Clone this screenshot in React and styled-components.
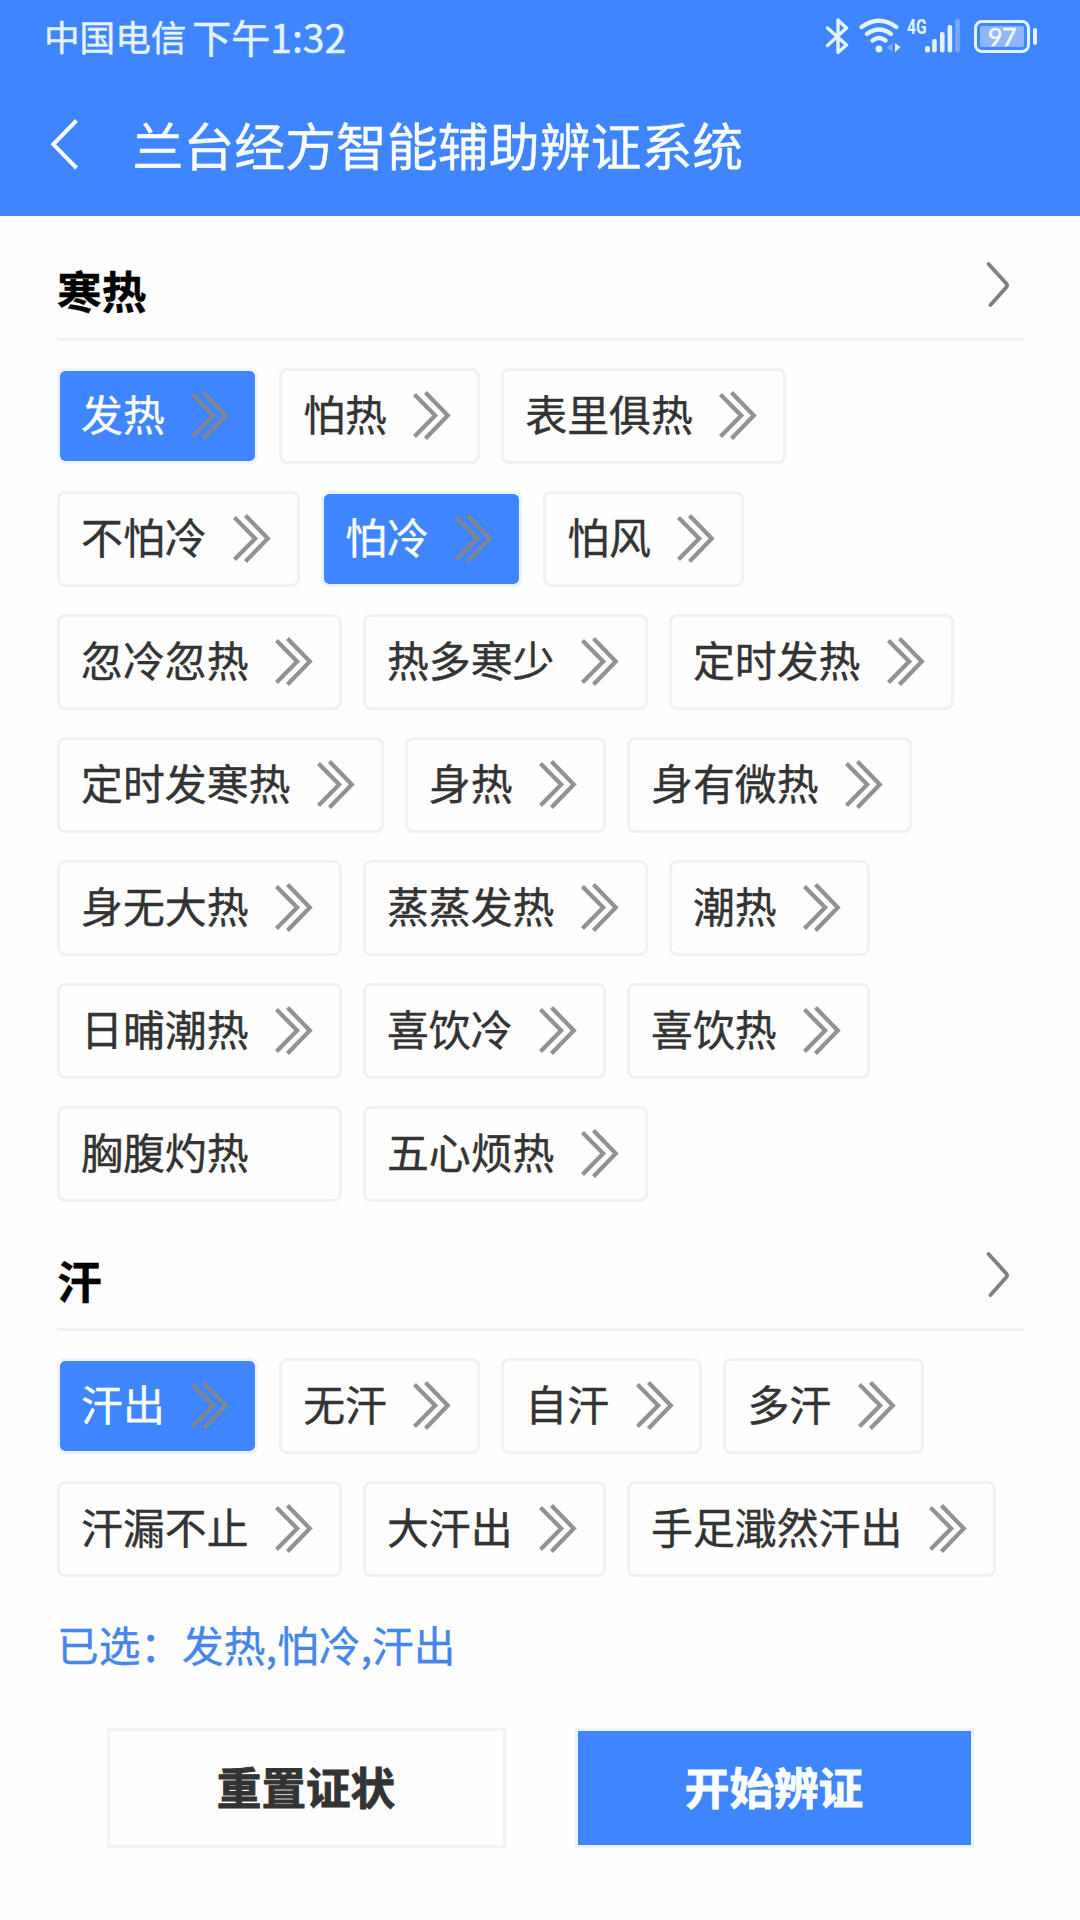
import React, { useState } from "react";
import styled, { createGlobalStyle } from "styled-components";

const GlobalStyle = createGlobalStyle`
  * {
    box-sizing: border-box;
  }

  body {
    margin: 0;
    background: #fefefe;
    font-family: "Noto Sans CJK SC", "Noto Sans", sans-serif;
  }

  button {
    font-family: inherit;
    margin: 0;
    cursor: pointer;
  }
`;

const Page = styled.div`
  width: 1080px;
  height: 1920px;
  background: #fefefe;
  overflow: hidden;
`;

const Header = styled.header`
  height: 216px;
  background: #3e85ff;
`;

const StatusBar = styled.div`
  height: 76px;
  padding: 0 43px 0 44px;
  display: flex;
  align-items: flex-start;
  color: #e4f3ff;
`;

const Carrier = styled.span`
  font-size: 35.6px;
  line-height: 72px;
  white-space: nowrap;
  -webkit-text-stroke: 0.5px currentColor;
`;

const Clock = styled.span`
  font-size: 39px;
  line-height: 72px;
  margin-left: 6px;
  white-space: nowrap;
  -webkit-text-stroke: 0.5px currentColor;
`;

const StatusIcons = styled.div`
  display: flex;
  align-items: flex-start;
  height: 76px;
  margin-left: auto;
`;

const BluetoothIcon = styled.svg`
  width: 24px;
  height: 76px;
  margin-right: 9px;
`;

const WifiIcon = styled.svg`
  width: 44px;
  height: 76px;
`;

const NetworkType = styled.span`
  width: 18px;
  margin: 15px 0 0 5px;
  font-family: "Roboto", sans-serif;
  font-size: 20px;
  font-weight: 700;
  line-height: 24px;
  transform: scaleX(0.78);
  transform-origin: 0 0;
`;

const SignalIcon = styled.svg`
  width: 36px;
  height: 76px;
`;

const Battery = styled.div`
  display: flex;
  align-items: center;
  gap: 3px;
  height: 33px;
  margin: 20px 0 0 13px;

  &::after {
    content: "";
    width: 4px;
    height: 17px;
    border-radius: 2px;
    background: #e4f3ff;
  }
`;

const BatteryBody = styled.div`
  width: 56px;
  height: 33px;
  padding: 3px;
  border: 3px solid #e4f3ff;
  border-radius: 8px;
`;

const BatteryLevel = styled.div`
  height: 21px;
  border-radius: 2px;
  background: #8fb5ff;
  color: #f0f8ff;
  font-family: "Lato", sans-serif;
  font-size: 25px;
  font-weight: 400;
  line-height: 21px;
  letter-spacing: -0.6px;
  text-align: center;
  -webkit-text-stroke: 0.6px currentColor;
`;

const TitleBar = styled.div`
  height: 140px;
  padding-left: 49px;
  display: flex;
  align-items: flex-start;
`;

const BackIcon = styled.svg`
  width: 30px;
  height: 52px;
  margin-top: 42px;
`;

const Title = styled.h1`
  margin: 0 0 0 53.5px;
  font-size: 50.9px;
  font-weight: 400;
  line-height: 136px;
  color: #fafeff;
  -webkit-text-stroke: 0.4px currentColor;
`;

const Section = styled.section`
  padding: 0 56px 4px 57px;
`;

const SectionHeader = styled.div`
  height: 125px;
  border-bottom: 3px solid #f1f1f1;
  display: flex;
  justify-content: space-between;
  align-items: flex-start;
`;

const SectionTitle = styled.h2`
  margin: 0;
  font-size: 44.8px;
  font-weight: 700;
  line-height: 148px;
  color: #000;
  -webkit-text-stroke: 0.4px currentColor;
`;

const SectionArrow = styled.svg`
  width: 26px;
  height: 48px;
  margin: 45px 13px 0 0;
`;

const Chips = styled.div`
  padding-top: 27px;
  display: flex;
  flex-wrap: wrap;
  gap: 27px 21.2px;
`;

const Chip = styled.button`
  height: 96px;
  padding: 0 25.7px 0 21px;
  border: 3px solid ${({ $selected }) => ($selected ? "#ebf3fe" : "#f1f1f1")};
  border-radius: 8px;
  display: flex;
  align-items: center;
  background: ${({ $selected }) => ($selected ? "#3e85ff" : "#fefefe")};
  background-clip: padding-box;
  color: ${({ $selected }) => ($selected ? "#fafeff" : "#333")};
  font-size: 41.9px;
  white-space: nowrap;
  -webkit-text-stroke: 0.4px currentColor;
`;

const ChipLabel = styled.span`
  line-height: 84px;
  height: 90px;
`;

const ChipArrow = styled.svg`
  width: 38px;
  height: 50px;
  margin: -2px 0 0 26.5px;
  visibility: ${({ $hidden }) => ($hidden ? "hidden" : "visible")};
`;

const Selected = styled.p`
  margin: 0;
  padding: 23px 57px 0;
  font-size: 41.7px;
  line-height: 80px;
  color: #4586ea;
  -webkit-text-stroke: 0.4px currentColor;
`;

const Actions = styled.div`
  padding: 44px 0 0 107px;
  display: flex;
  gap: 69px;
`;

const ActionButton = styled.button`
  width: 399px;
  height: 120px;
  padding: 0 1px 5px 0;
  border: 3px solid ${({ $primary }) => ($primary ? "#ebf5fe" : "#f3f3f3")};
  background: ${({ $primary }) => ($primary ? "#3e85ff" : "#fefefe")};
  background-clip: padding-box;
  color: ${({ $primary }) => ($primary ? "#fafeff" : "#333")};
  font-size: 44.6px;
  font-weight: 700;
  -webkit-text-stroke: 0.9px currentColor;
`;

const GROUPS = [
  {
    title: "寒热",
    items: [
      "发热", "怕热", "表里俱热", "不怕冷", "怕冷", "怕风",
      "忽冷忽热", "热多寒少", "定时发热", "定时发寒热", "身热", "身有微热",
      "身无大热", "蒸蒸发热", "潮热", "日晡潮热", "喜饮冷", "喜饮热",
      "胸腹灼热", "五心烦热",
    ],
  },
  {
    title: "汗",
    items: ["汗出", "无汗", "自汗", "多汗", "汗漏不止", "大汗出", "手足濈然汗出"],
  },
];

const NO_DETAIL = ["胸腹灼热"];

function PhoneStatus() {
  return (
    <StatusBar>
      <Carrier>中国电信</Carrier>
      <Clock>下午1:32</Clock>
      <StatusIcons>
        <BluetoothIcon viewBox="0 0 24 76" fill="none" stroke="currentColor" strokeWidth="3.4" strokeLinecap="round" strokeLinejoin="round">
          <path d="M2.5 28 L21.5 45 L13 52.5 V20 L21.5 28 L2.5 45.5" />
        </BluetoothIcon>
        <WifiIcon viewBox="0 0 44 76" fill="none" stroke="currentColor" strokeWidth="4.4" strokeLinecap="round">
          <path d="M3.5 27 Q21 14.5 38.5 27" />
          <path d="M9 34 Q21 25 33 34" />
          <path d="M14.5 40.5 Q21 35.5 27.5 40.5" />
          <circle cx="21" cy="49" r="3.4" fill="currentColor" stroke="none" />
          <path d="M34.5 43 V52 L28.5 47.5 Z" fill="#77aaff" stroke="none" />
          <path d="M37 43 L42.5 47 L37 52.5 Z" fill="currentColor" stroke="none" />
        </WifiIcon>
        <NetworkType>4G</NetworkType>
        <SignalIcon viewBox="0 0 36 76" fill="currentColor">
          <rect x="0" y="46" width="5" height="6.5" rx="2" />
          <rect x="7.2" y="39" width="4.6" height="13.5" rx="2" />
          <rect x="15" y="32" width="4.6" height="20.5" rx="2" />
          <rect x="22.6" y="25" width="4.6" height="27.5" rx="2" />
          <rect x="30.2" y="19" width="4.6" height="33.5" rx="2" opacity="0.35" />
        </SignalIcon>
        <Battery>
          <BatteryBody>
            <BatteryLevel>97</BatteryLevel>
          </BatteryBody>
        </Battery>
      </StatusIcons>
    </StatusBar>
  );
}

function Symptom({ name, selected, onToggle }) {
  return (
    <Chip $selected={selected} onClick={onToggle}>
      <ChipLabel>{name}</ChipLabel>
      <ChipArrow
        $hidden={NO_DETAIL.includes(name)}
        viewBox="0 0 38 50"
        fill="none"
        stroke="#868686"
        strokeWidth="4.2"
        strokeOpacity="0.9"
      >
        <path d="M1.5 4.5 L22.2 25.5 L1.5 46.5" />
        <path d="M12.5 2.5 L34.8 25.5 L12.5 48.5" />
      </ChipArrow>
    </Chip>
  );
}

export default function App() {
  const [selected, setSelected] = useState(["发热", "怕冷", "汗出"]);

  const toggle = (name) =>
    setSelected((list) =>
      list.includes(name) ? list.filter((n) => n !== name) : [...list, name]
    );

  return (
    <Page>
      <GlobalStyle />
      <Header>
        <PhoneStatus />
        <TitleBar>
          <BackIcon viewBox="0 0 30 52" fill="none" stroke="#fafeff" strokeWidth="4">
            <path d="M27.5 2.5 L4.3 26.3 L27.5 50" />
          </BackIcon>
          <Title>兰台经方智能辅助辨证系统</Title>
        </TitleBar>
      </Header>

      {GROUPS.map((group) => (
        <Section key={group.title}>
          <SectionHeader>
            <SectionTitle>{group.title}</SectionTitle>
            <SectionArrow viewBox="0 0 26 48" fill="none" stroke="#808080" strokeWidth="3.8" strokeLinecap="round" strokeLinejoin="round">
              <path d="M3.5 3 L21.3 22.5 Q22.8 24.4 21.3 26.3 L5.5 44" />
            </SectionArrow>
          </SectionHeader>
          <Chips>
            {group.items.map((name) => (
              <Symptom
                key={name}
                name={name}
                selected={selected.includes(name)}
                onToggle={() => toggle(name)}
              />
            ))}
          </Chips>
        </Section>
      ))}

      <Selected>已选：{selected.join(",")}</Selected>

      <Actions>
        <ActionButton onClick={() => setSelected([])}>重置证状</ActionButton>
        <ActionButton $primary>开始辨证</ActionButton>
      </Actions>
    </Page>
  );
}
